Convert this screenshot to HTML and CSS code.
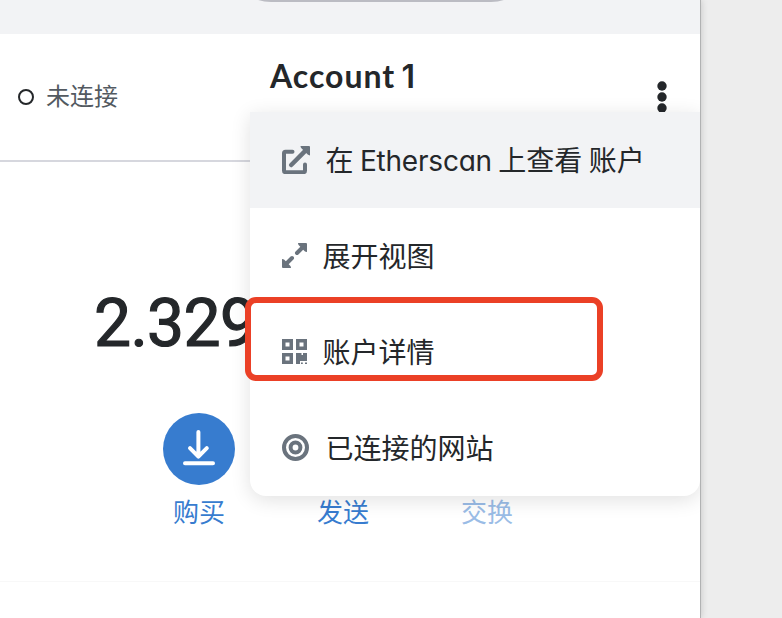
FILE: index.html
```html
<!DOCTYPE html>
<html lang="zh-CN">
<head>
<meta charset="utf-8">
<title>Account 1</title>
<link rel="stylesheet" href="styles.css">
</head>
<body>
<div class="wallet">
  <header class="topbar"><div class="network"></div></header>
  <section class="account-bar">
    <div class="status"><span class="status-dot"></span><span>未连接</span></div>
    <h1 class="account-name">Account <span class="account-number">1</span></h1>
    <svg class="more" width="10" height="32" viewBox="0 0 10 32"><circle cx="5" cy="5" r="4.7"/><circle cx="5" cy="16" r="4.7"/><circle cx="5" cy="27" r="4.7"/></svg>
  </section>
  <main class="overview">
    <div class="balance">2.329</div>
    <div class="actions">
      <div class="action">
        <span class="action-icon"><svg width="32" height="36" viewBox="0 0 32 36"><path d="M15.400 2v24M7 18.200l8.400 8.400 8.400-8.400M2 33.300h28"/></svg></span>
        <span>购买</span>
      </div>
      <div class="action"><span class="action-icon"></span><span>发送</span></div>
      <div class="action disabled"><span class="action-icon"></span><span>交换</span></div>
    </div>
  </main>
  <section class="assets"></section>

  <nav class="menu">
    <div class="item active">
      <svg width="28" height="28" viewBox="0 0 28 28"><path class="line" d="M10.500 5.800H3.500Q2 5.800 2 7.300V24.700Q2 26.200 3.500 26.200H21.500Q23 26.200 23 24.700V18.500"/><path class="arrow" d="M9.200 19L23 5.200"/><path d="M18.500 0H27q1 0 1 1v8.400q-1.500 0-2.300-.8L19.400 2.300Q18.500 1.400 18.500 0z"/></svg>
      <span>在 <span class="latin">Etherscan</span> 上查看 账户</span>
    </div>
    <div class="item">
      <svg width="25" height="25" viewBox="0 0 25 25"><path class="line" d="M15 10L20 5M10 15L5 20"/><path d="M16 0h8q1 0 1 1v8q-1.500 0-2.300-.8l-5.900-5.900Q16 1.500 16 0zM0 16q1.500 0 2.300.8l5.900 5.900q.8.8.8 2.300H1q-1 0-1-1z"/></svg>
      <span>展开视图</span>
    </div>
    <div class="item">
      <svg width="25" height="25" viewBox="0 0 25 25"><path fill-rule="evenodd" d="M0 0h11v11H0zM3.500 3.500v4h4v-4zM14 0h11v11H14zM17.500 3.500v4h4v-4zM0 14h11v11H0zM3.500 17.500v4h4v-4z"/><path d="M14 14h5.500v2H21v-2h4v8h-7v3h-4zM19 23.500h1.800V25H19zM23 23.500h2V25h-2z"/></svg>
      <span>账户详情</span>
    </div>
    <div class="item">
      <svg width="28" height="28" viewBox="0 0 28 28"><circle class="ring" cx="13.500" cy="13.500" r="11.500"/><circle class="ring" cx="13.500" cy="13.500" r="4.900"/></svg>
      <span>已连接的网站</span>
    </div>
  </nav>
  <div class="highlight"></div>
</div>
</body>
</html>
```
FILE: styles.css
```css
* { box-sizing: border-box; }
body {
  margin: 0;
  height: 618px;
  overflow: hidden;
  background: #ededed;
  color: #24272a;
  font-family: Inter, "Noto Sans CJK SC", sans-serif;
}
.wallet {
  position: relative;
  width: 701px;
  height: 618px;
  background: #fff;
  border-right: 1px solid #b1b2b3;
  box-shadow: 0 0 7px rgba(0, 0, 0, .18);
}
.topbar {
  display: flex;
  flex-direction: column;
  justify-content: flex-end;
  height: 34px;
  padding: 0 0 32px 231px;
  background: #f2f3f5;
  overflow: hidden;
}
.network {
  flex: none;
  width: 300px;
  height: 80px;
  border: 2px solid #bbbcc3;
  border-radius: 40px;
}
.account-bar {
  display: grid;
  grid-template-columns: 270px 1fr 43px;
  height: 128px;
  border-bottom: 2px solid #d6d7de;
}
.status {
  display: flex;
  align-items: center;
  gap: 12px;
  padding-left: 18px;
  color: #535a61;
  font-size: 24px;
  line-height: 36px;
}
.status-dot {
  width: 16px;
  height: 16px;
  border: 2px solid #24272a;
  border-radius: 50%;
}
.account-name {
  margin: 22px 0 0;
  font-family: Lato, sans-serif;
  font-size: 32px;
  font-weight: 700;
  line-height: 40px;
  letter-spacing: 1px;
  word-spacing: -2.500px;
}
.account-number {
  font-family: Inter, sans-serif;
  font-weight: 600;
}
.more {
  margin-top: 47px;
  fill: #24272a;
}
.overview {
  height: 420px;
  border-bottom: 1px solid #f8f8f8;
}
.balance {
  padding: 122px 0 0 94px;
  font-family: Roboto, sans-serif;
  font-size: 66px;
  font-weight: 400;
  line-height: 80px;
  letter-spacing: -.7px;
  -webkit-text-stroke: 1.200px #24272a;
}
.actions {
  display: flex;
  gap: 72px;
  padding: 49px 0 0 163px;
}
.action {
  display: flex;
  flex-direction: column;
  align-items: center;
  gap: 10px;
  width: 72px;
  color: #377ccf;
  font-size: 26px;
  line-height: 36px;
}
.action-icon {
  display: flex;
  align-items: center;
  justify-content: center;
  width: 72px;
  height: 72px;
  padding: 0 1px 3px 0;
  border-radius: 50%;
  background: #377ccf;
}
.action-icon svg {
  fill: none;
  stroke: #fff;
  stroke-width: 4;
  stroke-linecap: round;
  stroke-linejoin: round;
}
.disabled { opacity: .5; }
.menu {
  position: absolute;
  top: 112px;
  left: 250px;
  width: 450px;
  background: #fff;
  border-radius: 0 0 16px 16px;
  box-shadow: 0 4px 20px rgba(0, 0, 0, .12);
  clip-path: inset(-30px 0 -40px -30px);
}
.item {
  display: flex;
  align-items: center;
  gap: 16px;
  height: 96px;
  padding: 0 0 1px 32px;
  font-size: 28px;
  line-height: 40px;
  white-space: nowrap;
}
.item > span {
  padding-top: 3px;
  margin-left: -.5px;
  word-spacing: -1.500px;
}
.item.active { background: #f2f3f5; }
.item svg { flex: none; fill: #6a737d; }
.item .line { fill: none; stroke: #6a737d; stroke-width: 4; stroke-linecap: round; }
.item .arrow { stroke: #6a737d; stroke-width: 4.500; stroke-linecap: round; }
.item .ring { fill: none; stroke: #6a737d; stroke-width: 4; }
.latin { font-feature-settings: "cv11"; letter-spacing: -.2px; }
.highlight {
  position: absolute;
  top: 297px;
  left: 245px;
  width: 358px;
  height: 84px;
  border: 6px solid #eb4026;
  border-radius: 11px;
}
```
